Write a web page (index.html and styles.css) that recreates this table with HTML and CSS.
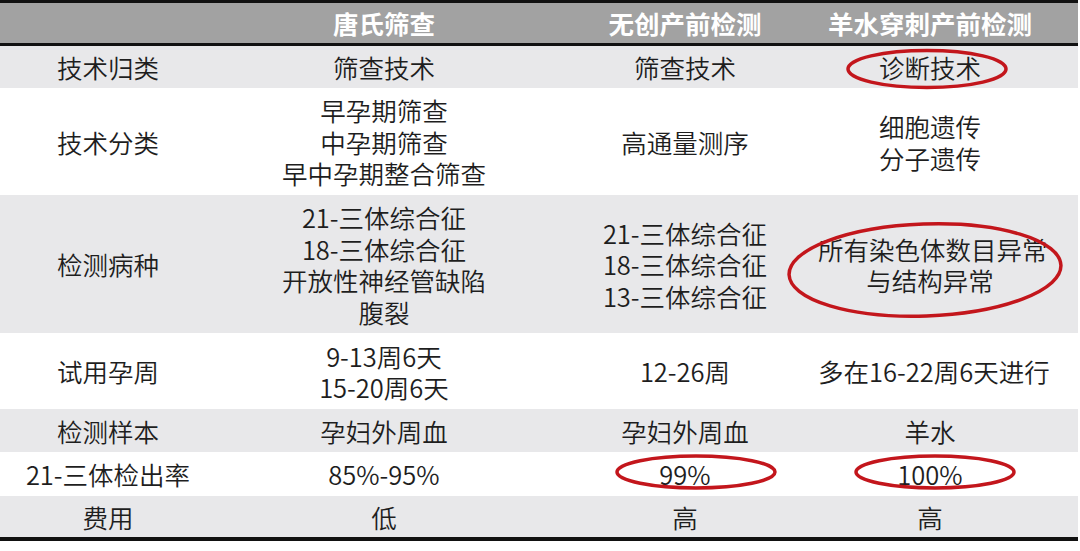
FILE: index.html
```html
<!DOCTYPE html>
<html lang="zh-CN">
<head>
<meta charset="utf-8">
<title>产前检测对比</title>
<link rel="stylesheet" href="styles.css">
</head>
<body>
<div class="wrap">
  <table class="cmp">
    <colgroup>
      <col class="c1"><col class="c2"><col class="c3"><col class="c4">
    </colgroup>
    <thead>
      <tr class="head">
        <th class="k"></th>
        <th class="v2">唐氏筛查</th>
        <th class="v3">无创产前检测</th>
        <th class="v4">羊水穿刺产前检测</th>
      </tr>
    </thead>
    <tbody>
      <tr class="g r1">
        <td class="k">技术归类</td>
        <td class="v2">筛查技术</td>
        <td class="v3">筛查技术</td>
        <td class="v4">诊断技术</td>
      </tr>
      <tr class="w r2">
        <td class="k">技术分类</td>
        <td class="v2"><div class="ln">早孕期筛查</div><div class="ln">中孕期筛查</div><div class="ln">早中孕期整合筛查</div></td>
        <td class="v3">高通量测序</td>
        <td class="v4"><div class="ln">细胞遗传</div><div class="ln">分子遗传</div></td>
      </tr>
      <tr class="g r3">
        <td class="k">检测病种</td>
        <td class="v2"><div class="ln">21-三体综合征</div><div class="ln">18-三体综合征</div><div class="ln">开放性神经管缺陷</div><div class="ln">腹裂</div></td>
        <td class="v3"><div class="ln">21-三体综合征</div><div class="ln">18-三体综合征</div><div class="ln">13-三体综合征</div></td>
        <td class="v4"><div class="ln">所有染色体数目异常</div><div class="ln">与结构异常</div></td>
      </tr>
      <tr class="w r4">
        <td class="k">试用孕周</td>
        <td class="v2"><div class="ln">9-13周6天</div><div class="ln">15-20周6天</div></td>
        <td class="v3">12-26周</td>
        <td class="v4">多在16-22周6天进行</td>
      </tr>
      <tr class="g r5">
        <td class="k">检测样本</td>
        <td class="v2">孕妇外周血</td>
        <td class="v3">孕妇外周血</td>
        <td class="v4">羊水</td>
      </tr>
      <tr class="w r6">
        <td class="k">21-三体检出率</td>
        <td class="v2">85%-95%</td>
        <td class="v3">99%</td>
        <td class="v4">100%</td>
      </tr>
      <tr class="g r7">
        <td class="k">费用</td>
        <td class="v2">低</td>
        <td class="v3">高</td>
        <td class="v4">高</td>
      </tr>
    </tbody>
  </table>
  <svg class="marks" width="1080" height="551" viewBox="0 0 1080 551" aria-hidden="true">
    <g fill="none" stroke="#c3161c" stroke-width="3.5">
      <ellipse cx="927" cy="69" rx="79" ry="18.5"/>
      <ellipse cx="925" cy="270" rx="136" ry="46" transform="rotate(-2 925 270)"/>
      <ellipse cx="696" cy="472" rx="79" ry="16"/>
      <ellipse cx="935" cy="472" rx="79" ry="16"/>
    </g>
  </svg>
</div>
</body>
</html>
```

FILE: styles.css
```css
html, body {
  margin: 0;
  padding: 0;
  background: #ffffff;
}

.wrap {
  position: relative;
  width: 1080px;
  height: 551px;
}

.cmp {
  width: 1078px;
  border-collapse: separate;
  border-spacing: 0;
  table-layout: fixed;
  font-family: "Noto Sans CJK SC", "Noto Sans", sans-serif;
  font-size: 25.5px;
  font-weight: 350;
  line-height: 31.5px;
  color: #1e1e1e;
  border-top: 3px solid #111;
  border-bottom: 4px solid #111;
}

.c1 { width: 216px; }
.c2 { width: 336px; }
.c3 { width: 266px; }
.c4 { width: 260px; }

th, td {
  padding: 0;
  text-align: center;
  vertical-align: middle;
  white-space: nowrap;
}

.ln {
  height: 31.5px;
  line-height: 31.5px;
}

.v4 { padding-right: 36px; }

.head {
  background: #a2a2a2;
  height: 43px;
}

.head th {
  color: #ffffff;
  font-weight: 700;
  font-size: 25.5px;
  border-bottom: 3px solid #111;
}

.g { background: #e8e8ea; }
.w { background: #ffffff; }

.r1 { height: 42px; }
.r2 { height: 107px; }
.r3 { height: 138px; }
.r4 { height: 76px; }
.r5 { height: 43px; }
.r6 { height: 44px; }
.r7 { height: 41px; }

.marks {
  position: absolute;
  left: 0;
  top: 0;
  pointer-events: none;
}
```
